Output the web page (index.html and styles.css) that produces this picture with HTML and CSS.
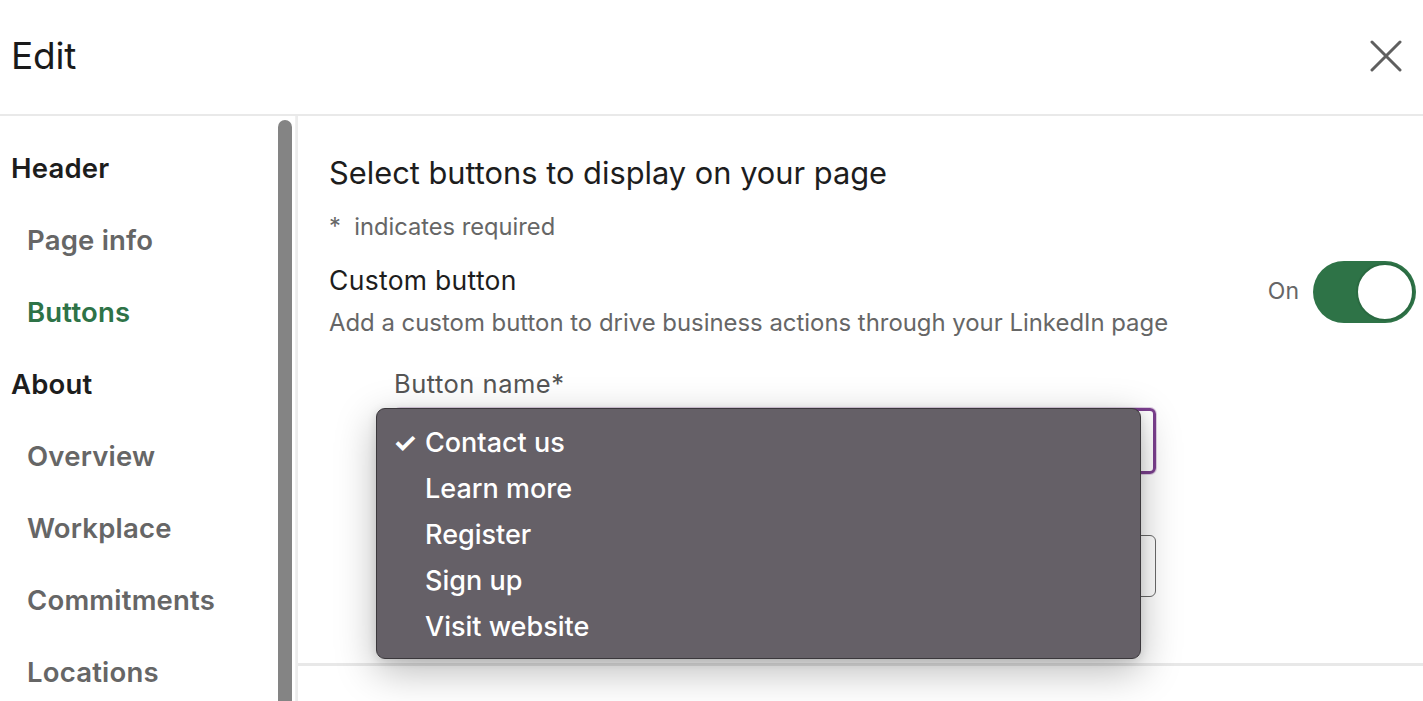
FILE: index.html
```html
<!DOCTYPE html>
<html lang="en">
<head>
<meta charset="utf-8">
<title>Edit</title>
<link rel="stylesheet" href="styles.css">
</head>
<body>
<div class="modal">
  <header class="modal-head">
    <h1 class="modal-title">Edit</h1>
    <button class="close" aria-label="Close">
      <svg width="32" height="32" viewBox="0 0 32 32"><path d="M2 2 L30 30 M30 2 L2 30" stroke="#5f5f5f" stroke-width="3" stroke-linecap="round" fill="none"/></svg>
    </button>
  </header>
  <div class="modal-body">
    <aside class="sidebar">
      <nav class="nav">
        <div class="nav-group">Header</div>
        <div class="nav-item">Page info</div>
        <div class="nav-item active">Buttons</div>
        <div class="nav-group">About</div>
        <div class="nav-item">Overview</div>
        <div class="nav-item">Workplace</div>
        <div class="nav-item">Commitments</div>
        <div class="nav-item">Locations</div>
      </nav>
      <div class="scroll-track"><div class="scroll-thumb"></div></div>
    </aside>
    <main class="content">
      <h2 class="section-title">Select buttons to display on your page</h2>
      <p class="required">* &nbsp;indicates required</p>
      <div class="custom-row">
        <div class="custom-text">
          <div class="custom-title">Custom button</div>
          <div class="custom-desc">Add a custom button to drive business actions through your LinkedIn page</div>
        </div>
        <div class="toggle-wrap">
          <span class="toggle-label">On</span>
          <span class="toggle"><span class="knob"></span></span>
        </div>
      </div>
      <div class="field">
        <label class="field-label">Button name*</label>
        <div class="select focused"></div>
        <div class="input"></div>
        <ul class="menu">
          <li class="menu-item"><span class="check">✓</span>Contact us</li>
          <li class="menu-item">Learn more</li>
          <li class="menu-item">Register</li>
          <li class="menu-item">Sign up</li>
          <li class="menu-item">Visit website</li>
        </ul>
      </div>
      <div class="divider"></div>
    </main>
  </div>
</div>
</body>
</html>
```

FILE: styles.css
```css
* { box-sizing: border-box; }
html, body { margin: 0; padding: 0; }
body {
  background: #ffffff;
  font-family: Inter, "Liberation Sans", sans-serif;
  color: #1d1d1d;
  overflow: hidden;
  width: 1423px;
  height: 701px;
}
.modal { width: 1423px; height: 701px; display: flex; flex-direction: column; }
.modal-head {
  height: 116px;
  flex: none;
  display: flex;
  align-items: center;
  justify-content: space-between;
  padding: 0 21px 0 11px;
  border-bottom: 2px solid #e9e9e9;
}
.modal-title {
  margin: 0 0 3px 0;
  font-size: 37px;
  font-weight: 400;
  color: #1a1a1a;
  letter-spacing: -0.2px;
}
.close {
  background: none;
  border: 0;
  padding: 0;
  width: 32px;
  height: 32px;
  margin-bottom: 3px;
  cursor: pointer;
}
.close svg { display: block; }
.modal-body { flex: 1; display: flex; min-height: 0; }
.sidebar {
  width: 298px;
  flex: none;
  display: flex;
  border-right: 2px solid #ececec;
}
.nav { flex: 1; padding-top: 16px; }
.nav-group, .nav-item {
  height: 72px;
  line-height: 72px;
  font-size: 27.5px;
  font-weight: 600;
  white-space: nowrap;
  letter-spacing: 0.2px;
}
.nav-group { padding-left: 11px; color: #1d1d1d; }
.nav-item { padding-left: 27px; color: #666666; }
.nav-item.active { color: #2e7347; }
.scroll-track {
  width: 18px;
  flex: none;
  padding-top: 4px;
  border-right: 1px solid #f0f0f0;
}
.scroll-thumb {
  width: 14px;
  height: 100%;
  background: #848484;
  border-radius: 7px 7px 0 0;
}
.content {
  flex: 1;
  padding: 37px 0 0 31px;
  position: relative;
}
.section-title {
  margin: 0;
  font-size: 30.8px;
  line-height: 40px;
  font-weight: 400;
  color: #1d1d1d;
}
.required {
  margin: 19px 0 0 0;
  font-size: 23.7px;
  line-height: 30px;
  color: #666666;
}
.custom-row {
  margin-top: 23px;
  display: flex;
  justify-content: space-between;
  align-items: flex-start;
}
.custom-title {
  font-size: 26.5px;
  line-height: 30px;
  color: #1d1d1d;
  letter-spacing: 0.3px;
}
.custom-desc {
  margin-top: 13px;
  font-size: 23.9px;
  line-height: 30px;
  color: #666666;
}
.toggle-wrap {
  display: flex;
  align-items: center;
  gap: 14px;
  margin-top: -4px;
  margin-right: 7px;
}
.toggle-label { font-size: 23px; color: #666666; margin-top: -2px; }
.toggle {
  width: 103px;
  height: 62px;
  border-radius: 31px;
  background: #2e7347;
  display: flex;
  justify-content: flex-end;
  align-items: center;
  padding-right: 2px;
}
.knob {
  width: 58px;
  height: 58px;
  border-radius: 50%;
  background: #ffffff;
  border: 2px solid #2a6a41;
}
.field {
  position: relative;
  margin: 31px 0 0 65px;
  width: 762px;
}
.field-label {
  display: block;
  font-size: 25.5px;
  line-height: 30px;
  color: #555555;
  letter-spacing: 0.5px;
}
.select {
  margin-top: 9px;
  height: 66px;
  border-radius: 6px;
  border: 3px solid #7b3f8e;
  box-shadow: 0 0 0 1px rgba(123, 63, 142, 0.25);
}
.input {
  margin-top: 61px;
  height: 62px;
  border-radius: 6px;
  border: 1.5px solid #6a6a6a;
}
.menu {
  position: absolute;
  left: -18px;
  top: 39px;
  width: 765px;
  height: 251px;
  margin: 0;
  padding: 11px 0 0 0;
  list-style: none;
  background: #656067;
  border: 1.5px solid #3b383c;
  border-radius: 9px;
  box-shadow: 0 12px 40px rgba(0, 0, 0, 0.28), 0 2px 10px rgba(0, 0, 0, 0.12);
}
.menu-item {
  position: relative;
  height: 46px;
  line-height: 46px;
  padding-left: 48px;
  font-size: 27px;
  color: #ffffff;
  font-weight: 500;
}
.check {
  position: absolute;
  left: 16px;
  top: 0;
  font-size: 27px;
  font-weight: 700;
}
.divider {
  margin-top: 66px;
  margin-left: -31px;
  height: 3px;
  background: #e8e8e8;
}
```
